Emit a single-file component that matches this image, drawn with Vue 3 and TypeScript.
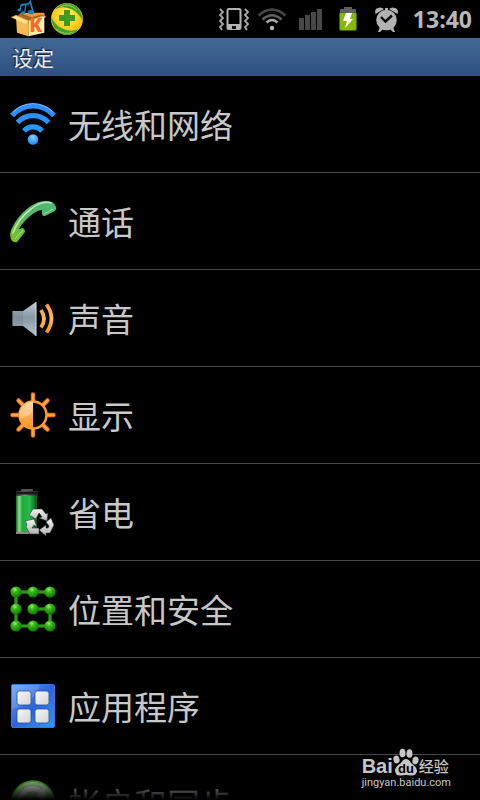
<script setup lang="ts">
type IconName = 'wifi' | 'call' | 'sound' | 'display' | 'power' | 'security' | 'apps' | 'sync'

interface SettingItem {
  icon: IconName
  label: string
}

const items: SettingItem[] = [
  { icon: 'wifi', label: '无线和网络' },
  { icon: 'call', label: '通话' },
  { icon: 'sound', label: '声音' },
  { icon: 'display', label: '显示' },
  { icon: 'power', label: '省电' },
  { icon: 'security', label: '位置和安全' },
  { icon: 'apps', label: '应用程序' },
  { icon: 'sync', label: '帐户和同步' },
]

const rays: number[] = [0, 45, 90, 135, 180, 225, 270, 315]

// Unlock pattern dots on a 3 by 3 grid
const dots: [number, number][] = [7, 24, 41].flatMap((y) =>
  [7, 24, 41].map((x): [number, number] => [x, y]),
)
</script>

<template>
  <div class="screen">
    <header class="status">
      <div class="group">
        <svg class="cell" viewBox="30 0 114 114" aria-hidden="true">
          <path d="M48 52 L62 38 L130 40 L133 50 L85 64Z" fill="#a8641c" />
          <path d="M48 50 L85 64 V109 L51 98Z" fill="#f7b956" />
          <path d="M85 64 L133 50 V98 L85 109Z" fill="#fff0a8" />
          <path d="M34 52 L48 46 L85 62 L76 72Z" fill="#ffe092" />
          <path d="M85 62 L128 48 L140 50 L94 70Z" fill="#fff3b5" />
          <path d="M60 40 L96 38 L132 38 L136 47 L122 44 L96 52Z" fill="#e99a38" />
          <path d="M34 52 L48 46 L85 62 L133 48 M85 64 V109" fill="none" stroke="#e39a35" stroke-width="2" />
          <g fill="#1784c4" stroke="#1784c4">
            <ellipse cx="58" cy="30" rx="5" ry="4" />
            <ellipse cx="70" cy="38" rx="6" ry="4" />
            <ellipse cx="93" cy="36" rx="9" ry="6" />
            <path d="M60 29 L64 14 L78 12 L74 36 M64 16 L78 14" fill="none" stroke-width="4" />
            <path d="M99 35 L91 5 Q88 12 79 13" fill="none" stroke-width="5" />
          </g>
          <text x="88" y="96" class="box-letter">K</text>
        </svg>
        <svg class="cell" viewBox="0 0 38 38" aria-hidden="true">
          <defs>
            <radialGradient id="globe" cx=".5" cy=".4" r=".6">
              <stop offset="0" stop-color="#fff45c" />
              <stop offset="1" stop-color="#f5b800" />
            </radialGradient>
          </defs>
          <circle cx="19" cy="19" r="16" fill="url(#globe)" />
          <path d="M7 9 Q18 -2 29 7 Q34 12 35 21 Q29 10 20 8 Q13 6 7 9Z" fill="#43a02b" />
          <path d="M31 29 Q20 40 9 31 Q4 26 3 17 Q9 28 18 30 Q25 32 31 29Z" fill="#43a02b" />
          <path d="M12 7 Q21 2 29 10 M8 29 Q16 36 25 32" fill="none" stroke="#8bd04b" stroke-width="1" />
          <path d="M16 10 h6 v5 h5 v6 h-5 v5 h-6 v-5 h-5 v-6 h5Z" fill="#3d9a24" />
        </svg>
      </div>
      <div class="group">
        <svg class="cell" viewBox="0 0 38 38" aria-hidden="true">
          <rect x="12.500" y="9" width="13" height="20" rx="1.500" fill="none" stroke="#b4b4b4" stroke-width="2" />
          <path d="M12 24 h14 v5 h-14Z" fill="#b4b4b4" />
          <rect x="17" y="26" width="4" height="3" fill="#111" />
          <path d="M5 9 l3 3 l-3 3 l3 3 l-3 3 l3 3 l-3 3 l2 3 M30 9 l3 3 l-3 3 l3 3 l-3 3 l3 3 l-3 3 l2 3" fill="none" stroke="#a8a8a8" stroke-width="1.800" />
        </svg>
        <svg class="cell" viewBox="0 0 38 38" fill="none" aria-hidden="true">
          <path d="M5.500 15.500 Q19 3.500 32.500 15.500" stroke="#484848" stroke-width="2.400" />
          <path d="M9.500 19.500 Q19 11 28.500 19.500" stroke="#606060" stroke-width="2.400" />
          <path d="M13.500 22.500 Q19 17.500 24.500 22.500" stroke="#b0b0b0" stroke-width="2.400" />
          <circle cx="19" cy="28" r="2.200" fill="#b8b8b8" />
        </svg>
        <svg class="cell" viewBox="0 0 38 38" fill="#484848" aria-hidden="true">
          <rect x="8" y="18" width="5" height="12" />
          <rect x="14" y="15" width="5" height="15" />
          <rect x="20" y="12" width="5" height="18" />
          <rect x="26" y="9" width="5" height="21" />
        </svg>
        <svg class="cell" viewBox="0 0 38 38" aria-hidden="true">
          <rect x="10" y="12" width="18" height="19" rx="2" fill="#3c6000" />
          <path d="M11 10 q0 -1 1 -1 h3 v-2 h8 v2 h3 q1 0 1 1 v3 h-16Z" fill="#5e5e5e" />
          <rect x="11" y="13" width="16" height="17" rx="1" fill="#86b80c" />
          <path d="M17 13 h6 l-2 6 h3 l-8 9 l2 -7 h-4Z" fill="#fff" />
        </svg>
        <svg class="cell" viewBox="0 0 38 38" aria-hidden="true">
          <g fill="#b2b2b2">
            <path d="M8.500 14 Q7 9 11 8 Q14 6.500 17 9Z M30.500 14 Q32 9 28 8 Q25 6.500 22 9Z" />
            <circle cx="19.500" cy="20" r="10.300" />
            <path d="M13 27 l3 2 l-3 3 h-2Z M26 27 l-3 2 l3 3 h2Z" />
            <rect x="18" y="8" width="3" height="4" />
          </g>
          <path d="M14 17 L18.500 21.500 L25 15.500" fill="none" stroke="#080808" stroke-width="2.400" />
        </svg>
        <time class="clock">13:40</time>
      </div>
    </header>

    <h1 class="title">设定</h1>

    <main class="content">
      <ul class="list">
        <li v-for="item in items" :key="item.icon">
          <a class="row" :href="`#${item.icon}`">
            <svg v-if="item.icon === 'wifi'" class="icon" viewBox="0 0 48 48" fill="none" aria-hidden="true">
              <defs>
                <linearGradient id="blue" x1="0" y1="4" x2="0" y2="46" gradientUnits="userSpaceOnUse">
                  <stop offset="0" stop-color="#2f8cff" />
                  <stop offset="1" stop-color="#1aa2ff" />
                </linearGradient>
                <radialGradient id="ball" cx=".5" cy=".3" r=".7">
                  <stop offset="0" stop-color="#8ccfff" />
                  <stop offset="1" stop-color="#1486f5" />
                </radialGradient>
              </defs>
              <g stroke="url(#blue)" stroke-width="5.200">
                <path d="M3 15.500 A28 28 0 0 1 45 15.500" />
                <path d="M8.500 22.500 A21 21 0 0 1 39.500 22.500" />
                <path d="M15 31 A12 12 0 0 1 33 31" />
              </g>
              <path d="M4 12 A28 28 0 0 1 44 12" stroke="#7fbaff" stroke-width="1" />
              <circle cx="24" cy="39.500" r="5.300" fill="url(#ball)" />
            </svg>

            <svg v-else-if="item.icon === 'call'" class="icon" viewBox="0 0 48 48" aria-hidden="true">
              <defs>
                <linearGradient id="phone" x1="1" y1="0" x2="0" y2="1">
                  <stop offset="0" stop-color="#4fb878" />
                  <stop offset=".5" stop-color="#58b566" />
                  <stop offset="1" stop-color="#7cc41c" />
                </linearGradient>
              </defs>
              <path d="M47 10 Q45 4 38 4 Q29 3 19 11 Q8 20 3 31 Q0 37 2 42 Q4 46 8 45 L16 35 Q16 32 14 31 L10 32 Q13 26 20 20 Q26 14 33 13 L33 17 Q33 19 36 19 L46 14 Q48 12 47 10Z" fill="url(#phone)" />
              <path d="M42 6 Q33 3 22 12 Q9 22 4 36" fill="none" stroke="#b9e8b9" stroke-width="1.600" stroke-linecap="round" />
              <path d="M35 17 L44 12 M6 42 L14 33" stroke="#9be08a" stroke-width="1" />
            </svg>

            <svg v-else-if="item.icon === 'sound'" class="icon" viewBox="0 0 48 48" aria-hidden="true">
              <defs>
                <linearGradient id="cone" x1="0" y1="0" x2="0" y2="1">
                  <stop offset="0" stop-color="#c5ced6" />
                  <stop offset=".45" stop-color="#8797a4" />
                  <stop offset="1" stop-color="#b6c5d0" />
                </linearGradient>
                <linearGradient id="wave" x1="0" y1="9" x2="0" y2="40" gradientUnits="userSpaceOnUse">
                  <stop offset="0" stop-color="#ff9a3c" />
                  <stop offset=".5" stop-color="#ffb95a" />
                  <stop offset="1" stop-color="#ff8a00" />
                </linearGradient>
              </defs>
              <path d="M3.500 17 H14 L27 8 V42 L14 32 H3.500Z" fill="url(#cone)" />
              <path d="M3.500 17 H14 V32 H3.500Z" fill="#677887" fill-opacity=".3" />
              <path d="M27 8 V42" stroke="#d9e0e6" stroke-width="1" />
              <g fill="none" stroke="url(#wave)" stroke-width="3.800">
                <path d="M32 16 Q38 25 32 33.500" />
                <path d="M37.500 10.500 Q47.500 24.500 37.500 38.500" />
              </g>
            </svg>

            <svg v-else-if="item.icon === 'display'" class="icon" viewBox="0 0 48 48" aria-hidden="true">
              <defs>
                <linearGradient id="sun" x1="0" y1="0" x2="0" y2="1">
                  <stop offset="0" stop-color="#ffc27d" />
                  <stop offset=".5" stop-color="#ffab50" />
                  <stop offset="1" stop-color="#ff9420" />
                </linearGradient>
              </defs>
              <g stroke="#e06a10" stroke-width="4.500" stroke-linecap="round">
                <path v-for="angle in rays" :key="angle" d="M24 9 V3.500" :transform="`rotate(${angle} 24 24)`" />
              </g>
              <g stroke="#ffa64a" stroke-width="2.500" stroke-linecap="round">
                <path v-for="angle in rays" :key="angle" d="M24 10 V3.500" :transform="`rotate(${angle} 24 24)`" />
              </g>
              <circle cx="24" cy="24" r="13.500" fill="#000" stroke="#ff9a38" stroke-width="2.500" />
              <path d="M24 10.500 A13.500 13.500 0 0 0 24 37.500Z" fill="url(#sun)" />
              <path d="M24 10.500 A13.500 13.500 0 0 0 10.500 27 Q20 26 24 20Z" fill="#fff" fill-opacity=".3" />
            </svg>

            <svg v-else-if="item.icon === 'power'" class="icon" viewBox="0 0 48 48" aria-hidden="true">
              <defs>
                <linearGradient id="cell" x1="0" y1="0" x2="1" y2="0">
                  <stop offset="0" stop-color="#0c6b22" />
                  <stop offset=".15" stop-color="#8fe08f" />
                  <stop offset=".3" stop-color="#20a83c" />
                  <stop offset=".65" stop-color="#27bd4b" />
                  <stop offset="1" stop-color="#085417" />
                </linearGradient>
                <linearGradient id="cap" x1="0" y1="0" x2="1" y2="0">
                  <stop offset="0" stop-color="#333" />
                  <stop offset=".4" stop-color="#8a8a8a" />
                  <stop offset="1" stop-color="#222" />
                </linearGradient>
                <linearGradient id="loop" x1="0" y1="0" x2="0" y2="1">
                  <stop offset="0" stop-color="#f4f4f4" />
                  <stop offset="1" stop-color="#b4b4b4" />
                </linearGradient>
              </defs>
              <rect x="12" y="1" width="12" height="3" rx="1" fill="#555" />
              <rect x="7" y="3" width="22" height="7" rx="1" fill="url(#cap)" />
              <path d="M7 5 H29" stroke="#191919" stroke-width="3" />
              <rect x="7" y="8" width="21" height="37" fill="url(#cell)" />
              <path d="M7 44 H28 V46 H7Z" fill="#888" />
              <g fill="url(#loop)" stroke="#303030" stroke-width=".6">
                <path d="M20 27 L24 21 H33 L37 26 L39 25 L38 33 L30 30 L33 29 L30 25 L27 31Z" />
                <path d="M16 33 L25 31 L28 39 L25 37 L23 40 H30 V46 H21 L17 39 L18 36Z" />
                <path d="M37 34 L42 30 L45 37 L41 45 H37 V48 L30 42 L37 37 V40 H39 L40 38Z" />
              </g>
            </svg>

            <svg v-else-if="item.icon === 'security'" class="icon" viewBox="0 0 48 48" aria-hidden="true">
              <defs>
                <radialGradient id="dot" cx=".4" cy=".28" r=".7">
                  <stop offset="0" stop-color="#9cf06a" />
                  <stop offset=".35" stop-color="#38b818" />
                  <stop offset="1" stop-color="#117a04" />
                </radialGradient>
              </defs>
              <path d="M41 7 H7 V41 H41 V24 H24" fill="none" stroke="#1d7d10" stroke-width="3.500" />
              <path d="M41 7 H7 V41 H41 V24 H24" fill="none" stroke="#38a022" stroke-width="1.500" />
              <circle v-for="[x, y] in dots" :key="`${x}-${y}`" :cx="x" :cy="y" r="5.600" fill="url(#dot)" />
            </svg>

            <svg v-else-if="item.icon === 'apps'" class="icon" viewBox="0 0 48 48" aria-hidden="true">
              <defs>
                <linearGradient id="tile" x1="0" y1="0" x2="1" y2="1">
                  <stop offset="0" stop-color="#5fa5f7" />
                  <stop offset=".5" stop-color="#2d62dc" />
                  <stop offset="1" stop-color="#2b9bf5" />
                </linearGradient>
                <linearGradient id="pane" x1="0" y1="0" x2="1" y2="1">
                  <stop offset="0" stop-color="#fafafa" />
                  <stop offset="1" stop-color="#d2d2d2" />
                </linearGradient>
              </defs>
              <rect x="2.500" y="2.500" width="43" height="43" rx="1.500" fill="url(#tile)" stroke="#3774e4" />
              <path d="M3 3 H31 Q27 20 3 27Z" fill="#fff" fill-opacity=".15" />
              <g fill="url(#pane)" stroke="#2a4f9e" stroke-width=".8">
                <rect x="8" y="9" width="14" height="14" rx="2.500" />
                <rect x="26" y="9" width="14" height="14" rx="2.500" />
                <rect x="8" y="27" width="14" height="14" rx="2.500" />
                <rect x="26" y="27" width="14" height="14" rx="2.500" />
              </g>
            </svg>

            <svg v-else class="icon" viewBox="0 0 48 48" aria-hidden="true">
              <defs>
                <linearGradient id="orb" x1="0" y1="0" x2="0" y2="1">
                  <stop offset="0" stop-color="#a8dc98" />
                  <stop offset=".3" stop-color="#9cc890" />
                  <stop offset=".5" stop-color="#4da030" />
                  <stop offset="1" stop-color="#2e8010" />
                </linearGradient>
              </defs>
              <circle cx="24" cy="23.500" r="21.500" fill="url(#orb)" stroke="#4fae22" stroke-width="1.500" />
              <path d="M12 27 A12.500 12.500 0 0 1 33 14" fill="none" stroke="#e4e4e4" stroke-width="5" />
              <path d="M36 8 L37 21 L26 18Z" fill="#e4e4e4" />
              <path d="M36 21 A12.500 12.500 0 0 1 15 33" fill="none" stroke="#e4e4e4" stroke-width="5" />
            </svg>
            <span class="label">{{ item.label }}</span>
          </a>
        </li>
      </ul>
    </main>

    <aside class="watermark">
      <div class="brand">
        <span class="bai">Bai</span>
        <svg class="paw" viewBox="0 0 26 28" aria-hidden="true">
          <g fill="#c6c6c6">
            <ellipse cx="3.500" cy="11.500" rx="3" ry="4" transform="rotate(-15 3.500 11.500)" />
            <ellipse cx="9.500" cy="5" rx="3" ry="4.300" />
            <ellipse cx="16.500" cy="5.500" rx="3" ry="4.300" />
            <ellipse cx="22.500" cy="12.500" rx="3" ry="4" transform="rotate(15 22.500 12.500)" />
            <path d="M13 11 Q16 11 18 15 Q24 19 24 23 Q23 28 18 27.500 Q13 26.500 8 27.500 Q2 28 2 22 Q3 18 8 15 Q10 11 13 11Z" />
          </g>
          <text x="13" y="25" class="du">du</text>
        </svg>
        <span class="jingyan">经验</span>
      </div>
      <div class="site">jingyan.baidu.com</div>
    </aside>
  </div>
</template>

<style>
body {
  background: #000;
}
</style>

<style scoped>
.screen {
  position: relative;
  display: flex;
  flex-direction: column;
  height: 100vh;
  overflow: hidden;
  background: #000;
  color: #c8c8c8;
  font-family: "Noto Sans", "Noto Sans CJK SC", sans-serif;
}

.status {
  display: flex;
  flex: none;
  justify-content: space-between;
  height: 38px;
  padding: 0 8px 0 10px;
}

.group {
  display: flex;
  align-items: center;
}

.cell {
  width: 38px;
  height: 38px;
}

.box-letter {
  fill: #f26a2e;
  font: 800 56px "Open Sans", sans-serif;
}

.clock {
  margin-left: 8px;
  color: #b8b8b8;
  font: 700 23px/38px "Open Sans", sans-serif;
}

.title {
  flex: none;
  margin: 0;
  padding: 0 12px;
  background: linear-gradient(#416996, #2f4f80);
  color: #ececec;
  font-family: "Noto Sans CJK SC", sans-serif;
  font-size: 21px;
  font-weight: 400;
  line-height: 38px;
  text-shadow: -1px -1px 1px #101820;
}

.content {
  position: relative;
  flex: 1;
  min-height: 0;
  overflow: hidden;
}

.content::after {
  position: absolute;
  right: 0;
  bottom: 0;
  left: 0;
  height: 26px;
  background: linear-gradient(transparent, #000);
  content: "";
}

.list {
  margin: 0;
  padding: 0;
  list-style: none;
}

.row {
  display: flex;
  align-items: center;
  gap: 11px;
  height: 96px;
  padding: 0 9px;
  border-bottom: 1px solid #484848;
  color: inherit;
  text-decoration: none;
}

.icon {
  flex: none;
  width: 48px;
  height: 48px;
}

.label {
  font-family: "Noto Sans CJK SC", sans-serif;
  font-size: 33px;
  font-weight: 400;
  line-height: 48px;
  white-space: nowrap;
}

.watermark {
  position: absolute;
  right: 29px;
  bottom: 10px;
  color: #c6c6c6;
}

.brand {
  display: flex;
  align-items: flex-end;
  height: 28px;
}

.bai {
  font: 700 20px/20px "Liberation Sans", sans-serif;
}

.paw {
  width: 26px;
  height: 28px;
}

.du {
  fill: #000;
  font: 700 13px "Liberation Sans", sans-serif;
  text-anchor: middle;
}

.jingyan {
  font: 500 15px/20px "Noto Sans CJK SC", sans-serif;
}

.site {
  font: 400 11px/14px Roboto, sans-serif;
}
</style>
